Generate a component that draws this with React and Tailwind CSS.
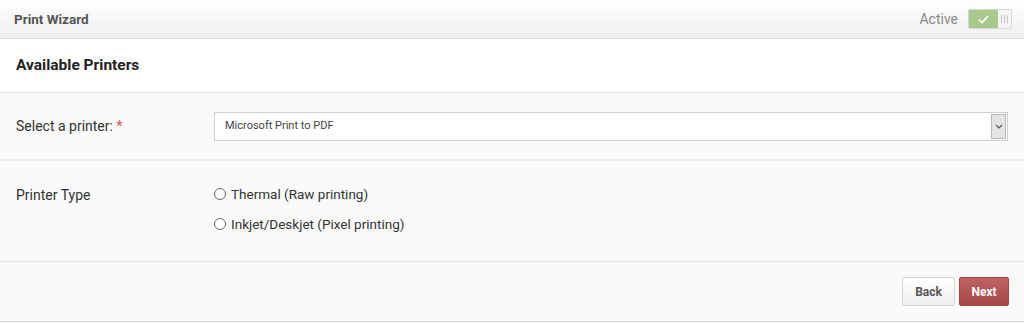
export default function App() {
  return (
    <div className="h-[323px] w-[1024px] bg-[#fafafa] font-['Roboto',sans-serif] text-[#333]">
      <div className="flex h-[39px] items-center justify-between border-b border-[#dcdcdc] bg-gradient-to-b from-white to-[#efefef] pl-[14px] pr-[12px]">
        <h1 className="text-[13.5px] font-bold text-[#555]">Print Wizard</h1>
        <div className="flex items-center gap-[10px]">
          <span className="text-[14px] text-[#888]">Active</span>
          <div className="flex h-[20px] w-[44px] overflow-hidden rounded-[2px] border border-[#d6d6d6]">
            <div className="flex w-[29px] items-center justify-center bg-[#a9c98c]">
              <svg width="11" height="9" viewBox="0 0 11 9" fill="none">
                <path d="M1 4.5 L4 7.5 L10 1" stroke="white" strokeWidth="1.6" />
              </svg>
            </div>
            <div className="flex flex-1 items-center justify-center gap-[2px] bg-[#f4f4f4]">
              <span className="h-[8px] w-px bg-[#c4c4c4]" />
              <span className="h-[8px] w-px bg-[#c4c4c4]" />
              <span className="h-[8px] w-px bg-[#c4c4c4]" />
            </div>
          </div>
        </div>
      </div>

      <div className="flex h-[54px] items-center border-b border-[#e6e6e6] bg-white px-[16px]">
        <h2 className="text-[15.5px] font-bold text-[#222]">Available Printers</h2>
      </div>

      <div className="flex h-[68px] items-center border-b-2 border-[#eeeeee] px-[16px]">
        <label className="w-[198px] text-[14px] text-[#333]">
          Select a printer: <span className="text-[#d9534f]">*</span>
        </label>
        <div className="flex h-[29px] flex-1 items-center border border-[#cfcfcf] bg-white pr-[1px]">
          <span className="flex-1 pl-[10px] text-[11px] text-[#444]">Microsoft Print to PDF</span>
          <div className="flex h-[25px] w-[15px] items-center justify-center border border-[#b8b8b8] bg-[#e4e4e4]">
            <svg width="8" height="5" viewBox="0 0 8 5" fill="none">
              <path d="M1 1 L4 4 L7 1" stroke="#555" strokeWidth="1.2" />
            </svg>
          </div>
        </div>
      </div>

      <div className="flex h-[101px] border-b border-[#e6e6e6] px-[16px] pt-[24px]">
        <div className="w-[198px] text-[14px] text-[#333]">Printer Type</div>
        <div className="flex flex-col gap-[12px] text-[13.5px] leading-[18px] text-[#333]">
          <label className="flex items-center gap-[5px]">
            <span className="h-[12px] w-[12px] rounded-full border border-[#666] bg-white" />
            Thermal (Raw printing)
          </label>
          <label className="flex items-center gap-[5px]">
            <span className="h-[12px] w-[12px] rounded-full border border-[#666] bg-white" />
            Inkjet/Deskjet (Pixel printing)
          </label>
        </div>
      </div>

      <div className="flex h-[60px] items-center justify-end gap-[4px] border-b border-[#d6d6d6] pr-[15px]">
        <button className="h-[29px] w-[53px] rounded-[2px] border border-[#d4d4d4] bg-gradient-to-b from-white to-[#f0f0f0] text-[12px] font-bold text-[#555]">
          Back
        </button>
        <button className="h-[29px] w-[50px] rounded-[2px] border border-[#a94442] bg-gradient-to-b from-[#c06262] to-[#a84747] text-[12px] font-bold text-white">
          Next
        </button>
      </div>
    </div>
  );
}
